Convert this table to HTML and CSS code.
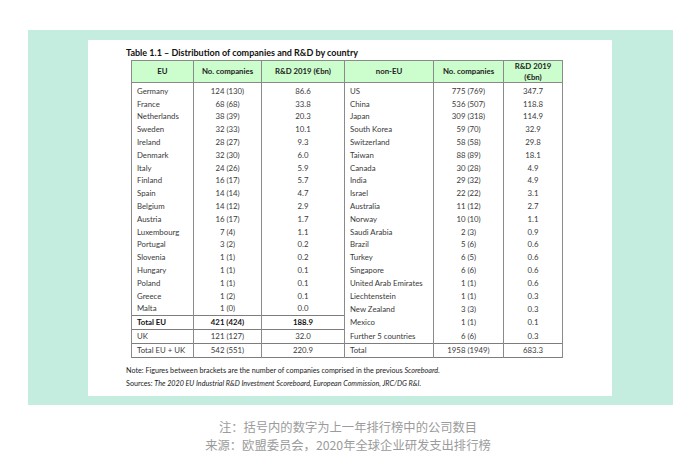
FILE: index.html
```html
<!DOCTYPE html>
<html>
<head>
<meta charset="utf-8">
<link rel="stylesheet" href="styles.css">
</head>
<body>
<div class="page">
  <div class="band">
    <div class="card">
      <div class="title">Table 1.1 – Distribution of companies and R&amp;D by country</div>
      <table class="tbl">
        <colgroup>
          <col class="c1"><col class="c2"><col class="c3"><col class="c4"><col class="c5"><col class="c6">
        </colgroup>
        <thead>
          <tr>
            <th>EU</th><th>No. companies</th><th class="sep">R&amp;D 2019 (€bn)</th>
            <th>non-EU</th><th>No. companies</th><th>R&amp;D 2019<br>(€bn)</th>
          </tr>
        </thead>
        <tbody>
          <tr class="first"><td class="name">Germany</td><td>124 (130)</td><td class="sep">86.6</td><td class="name">US</td><td>775 (769)</td><td>347.7</td></tr>
          <tr><td class="name">France</td><td>68 (68)</td><td class="sep">33.8</td><td class="name">China</td><td>536 (507)</td><td>118.8</td></tr>
          <tr><td class="name">Netherlands</td><td>38 (39)</td><td class="sep">20.3</td><td class="name">Japan</td><td>309 (318)</td><td>114.9</td></tr>
          <tr><td class="name">Sweden</td><td>32 (33)</td><td class="sep">10.1</td><td class="name">South Korea</td><td>59 (70)</td><td>32.9</td></tr>
          <tr><td class="name">Ireland</td><td>28 (27)</td><td class="sep">9.3</td><td class="name">Switzerland</td><td>58 (58)</td><td>29.8</td></tr>
          <tr><td class="name">Denmark</td><td>32 (30)</td><td class="sep">6.0</td><td class="name">Taiwan</td><td>88 (89)</td><td>18.1</td></tr>
          <tr><td class="name">Italy</td><td>24 (26)</td><td class="sep">5.9</td><td class="name">Canada</td><td>30 (28)</td><td>4.9</td></tr>
          <tr><td class="name">Finland</td><td>16 (17)</td><td class="sep">5.7</td><td class="name">India</td><td>29 (32)</td><td>4.9</td></tr>
          <tr><td class="name">Spain</td><td>14 (14)</td><td class="sep">4.7</td><td class="name">Israel</td><td>22 (22)</td><td>3.1</td></tr>
          <tr><td class="name">Belgium</td><td>14 (12)</td><td class="sep">2.9</td><td class="name">Australia</td><td>11 (12)</td><td>2.7</td></tr>
          <tr><td class="name">Austria</td><td>16 (17)</td><td class="sep">1.7</td><td class="name">Norway</td><td>10 (10)</td><td>1.1</td></tr>
          <tr><td class="name">Luxembourg</td><td>7 (4)</td><td class="sep">1.1</td><td class="name">Saudi Arabia</td><td>2 (3)</td><td>0.9</td></tr>
          <tr><td class="name">Portugal</td><td>3 (2)</td><td class="sep">0.2</td><td class="name">Brazil</td><td>5 (6)</td><td>0.6</td></tr>
          <tr><td class="name">Slovenia</td><td>1 (1)</td><td class="sep">0.2</td><td class="name">Turkey</td><td>6 (5)</td><td>0.6</td></tr>
          <tr><td class="name">Hungary</td><td>1 (1)</td><td class="sep">0.1</td><td class="name">Singapore</td><td>6 (6)</td><td>0.6</td></tr>
          <tr><td class="name">Poland</td><td>1 (1)</td><td class="sep">0.1</td><td class="name">United Arab Emirates</td><td>1 (1)</td><td>0.6</td></tr>
          <tr><td class="name">Greece</td><td>1 (2)</td><td class="sep">0.1</td><td class="name">Liechtenstein</td><td>1 (1)</td><td>0.3</td></tr>
          <tr><td class="name">Malta</td><td>1 (0)</td><td class="sep">0.0</td><td class="name">New Zealand</td><td>3 (3)</td><td>0.3</td></tr>
          <tr><td class="name eu-line bold">Total EU</td><td class="eu-line bold">421 (424)</td><td class="sep eu-line bold">188.9</td><td class="name">Mexico</td><td>1 (1)</td><td>0.1</td></tr>
          <tr><td class="name eu-line">UK</td><td class="eu-line">121 (127)</td><td class="sep eu-line">32.0</td><td class="name">Further 5 countries</td><td>6 (6)</td><td>0.3</td></tr>
          <tr class="last"><td class="name eu-line">Total EU + UK</td><td class="eu-line">542 (551)</td><td class="sep eu-line">220.9</td><td class="name eu-line">Total</td><td class="eu-line">1958 (1949)</td><td class="eu-line">683.3</td></tr>
        </tbody>
      </table>
      <div class="notes">
        <p>Note: Figures between brackets are the number of companies comprised in the previous <i>Scoreboard</i>.</p>
        <p>Sources: <i>The 2020 EU Industrial R&amp;D Investment Scoreboard, European Commission, JRC/DG R&amp;I.</i></p>
      </div>
    </div>
  </div>
  <div class="caption">
    <p>注：括号内的数字为上一年排行榜中的公司数目</p>
    <p>来源：欧盟委员会，2020年全球企业研发支出排行榜</p>
  </div>
</div>
</body>
</html>
```

FILE: styles.css
```css
html, body {
  margin: 0;
  padding: 0;
  background: #ffffff;
}

.page {
  width: 696px;
  height: 474px;
  padding-top: 30px;
  box-sizing: border-box;
}

.band {
  margin-left: 28px;
  width: 645px;
  box-sizing: border-box;
  padding: 10px 61px 9px 60px;
  background: #c4ede0;
}

.card {
  background: #ffffff;
  height: 356px;
  box-sizing: border-box;
  padding: 7px 0 0 38px;
  font-family: Lato, "Open Sans", sans-serif;
  color: #3a3a3a;
}

.title {
  font-weight: bold;
  font-size: 9px;
  line-height: 12px;
  color: #111;
  height: 13px;
}

.tbl {
  margin-left: 5px;
  border-collapse: collapse;
  table-layout: fixed;
  width: 431px;
  font-size: 7.8px;
  border: 1px solid #7d7d7d;
}

.c1 { width: 62px; }
.c2 { width: 68px; }
.c3 { width: 83px; }
.c4 { width: 89px; }
.c5 { width: 70px; }
.c6 { width: 59px; }

.tbl th {
  background: #ccfdcc;
  border: 1px solid #8a8a8a;
  height: 21px;
  padding: 0;
  font-weight: bold;
  font-size: 7.8px;
  line-height: 10.5px;
  color: #222;
  text-align: center;
}

.tbl td {
  height: 12.8px;
  padding: 0;
  line-height: 12.8px;
  text-align: center;
  border-left: 1px solid #8a8a8a;
  border-right: 1px solid #8a8a8a;
  white-space: nowrap;
  color: #3a3a3a;
}

.tbl tr.first td {
  height: 14.6px;
  padding-top: 1.8px;
  box-sizing: border-box;
}

.tbl td.name {
  text-align: left;
  padding-left: 5px;
}

.tbl td.eu-line {
  border-top: 1px solid #7d7d7d;
}

.tbl td.bold {
  font-weight: bold;
  color: #111;
}

.notes {
  margin-top: 6px;
  font-size: 7.2px;
  line-height: 13px;
  color: #222;
}

.notes p {
  margin: 0;
}

.caption {
  margin-top: 14px;
  text-align: center;
  font-family: "Noto Sans CJK SC", "Noto Sans", sans-serif;
  font-size: 12.3px;
  line-height: 17.5px;
  color: #9b9b9b;
}

.caption p {
  margin: 0;
}
```
